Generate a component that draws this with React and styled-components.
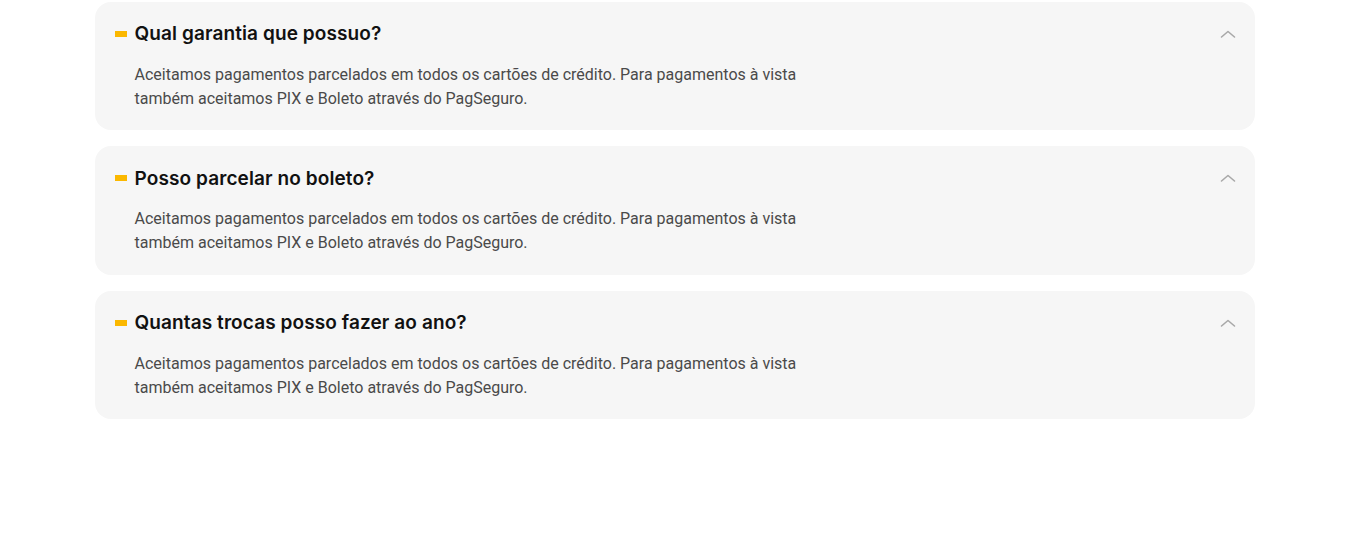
import React from 'react'
import styled, { createGlobalStyle } from 'styled-components'

const Global = createGlobalStyle`
  body {
    margin: 0;
    background: #fff;
    font-family: Roboto, "Liberation Sans", sans-serif;
  }
`

const List = styled.div`
  width: 1160px;
  margin: 0 auto;
  padding-top: 1.5px;
  display: flex;
  flex-direction: column;
  gap: 16px;
`

const Card = styled.div`
  background: #f6f6f6;
  border-radius: 16px;
  padding: 20px 20px 19.5px 20px;
`

const Header = styled.div`
  display: flex;
  align-items: center;
  height: 24px;
`

const Marker = styled.span`
  width: 12px;
  height: 6px;
  background: #fbb800;
  margin-right: 8px;
  flex-shrink: 0;
`

const Title = styled.h3`
  margin: 0;
  flex: 1;
  font-family: Inter, "Open Sans", sans-serif;
  font-size: 19px;
  font-weight: 600;
  color: #111;
  letter-spacing: 0.1px;
`

const Chevron = styled.svg`
  width: 16px;
  height: 16px;
  margin-right: -1px;
  color: #a8a8a8;
`

const Answer = styled.p`
  margin: 17px 0 0 20px;
  max-width: 680px;
  font-size: 16px;
  line-height: 24px;
  color: #4a4a4a;
`

const items = [
  'Qual garantia que possuo?',
  'Posso parcelar no boleto?',
  'Quantas trocas posso fazer ao ano?',
]

const text =
  'Aceitamos pagamentos parcelados em todos os cartões de crédito. Para pagamentos à vista também aceitamos PIX e Boleto através do PagSeguro.'

export default function App() {
  return (
    <>
      <Global />
      <List>
        {items.map((q) => (
          <Card key={q}>
            <Header>
              <Marker />
              <Title>{q}</Title>
              <Chevron viewBox="0 0 16 16" fill="none">
                <path d="M1.5 11 L8 5.5 L14.5 11" stroke="currentColor" strokeWidth="1.6" strokeLinecap="round" strokeLinejoin="round" />
              </Chevron>
            </Header>
            <Answer>{text}</Answer>
          </Card>
        ))}
      </List>
    </>
  )
}
